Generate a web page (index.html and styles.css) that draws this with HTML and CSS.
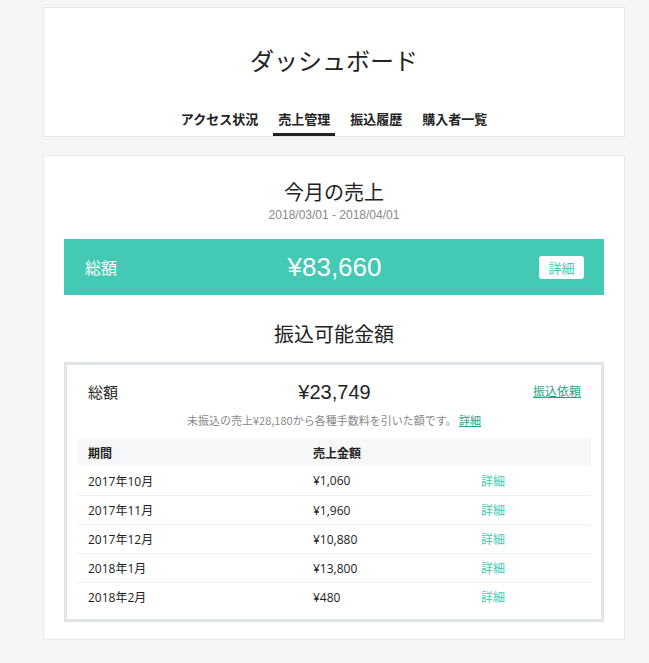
FILE: index.html
```html
<!DOCTYPE html>
<html lang="ja">
<head>
    <meta charset="UTF-8">
    <meta name="viewport" content="width=device-width, initial-scale=1.0">
    <title>ダッシュボード</title>
    <link rel="stylesheet" href="styles.css">
</head>
<body>
    <div class="page">
        <div class="card header-card">
            <h1 class="page-title">ダッシュボード</h1>
            <nav class="tabs">
                <a class="tab">アクセス状況</a>
                <a class="tab active">売上管理</a>
                <a class="tab">振込履歴</a>
                <a class="tab">購入者一覧</a>
            </nav>
        </div>

        <div class="card sales-card">
            <h2 class="section-title">今月の売上</h2>
            <div class="period">2018/03/01 - 2018/04/01</div>

            <div class="total-bar">
                <span class="total-label">総額</span>
                <span class="total-amount">¥83,660</span>
                <span class="total-action"><button class="detail-btn">詳細</button></span>
            </div>

            <h2 class="section-title transfer-title">振込可能金額</h2>

            <div class="transfer-box">
                <div class="transfer-summary">
                    <span class="summary-label">総額</span>
                    <span class="summary-amount">¥23,749</span>
                    <span class="summary-action"><a class="link">振込依頼</a></span>
                </div>
                <p class="note">未振込の売上¥28,180から各種手数料を引いた額です。 <a class="link">詳細</a></p>

                <table class="history">
                    <thead>
                        <tr>
                            <th class="col-period">期間</th>
                            <th class="col-amount">売上金額</th>
                            <th></th>
                        </tr>
                    </thead>
                    <tbody>
                        <tr><td>2017年10月</td><td>¥1,060</td><td><a class="row-link">詳細</a></td></tr>
                        <tr><td>2017年11月</td><td>¥1,960</td><td><a class="row-link">詳細</a></td></tr>
                        <tr><td>2017年12月</td><td>¥10,880</td><td><a class="row-link">詳細</a></td></tr>
                        <tr><td>2018年1月</td><td>¥13,800</td><td><a class="row-link">詳細</a></td></tr>
                        <tr><td>2018年2月</td><td>¥480</td><td><a class="row-link">詳細</a></td></tr>
                    </tbody>
                </table>
            </div>
        </div>
    </div>
</body>
</html>
```

FILE: styles.css
```css
/* General */
body {
  margin: 0;
  background-color: #f5f6f6;
  font-family: "Liberation Sans", "Noto Sans CJK JP", sans-serif;
  color: #222;
}

.page {
  width: 582px;
  margin: 7px 0 0 43px;
}

.card {
  background-color: #fff;
  border: 1px solid #e8e9e9;
  box-sizing: border-box;
}

/* Header card */
.header-card {
  height: 130px;
  display: flex;
  flex-direction: column;
  align-items: center;
}

.page-title {
  margin: 37px 0 0;
  font-size: 24px;
  font-weight: normal;
  line-height: 30px;
  font-family: "Noto Sans CJK JP", sans-serif;
}

.tabs {
  margin-top: auto;
  display: flex;
  gap: 10px;
}

.tab {
  padding: 0 5px 4px;
  font-size: 13px;
  font-weight: bold;
  line-height: 20px;
  font-family: "Noto Sans CJK JP", sans-serif;
  border-bottom: 3px solid transparent;
}

.tab.active {
  border-bottom-color: #222;
}

/* Sales card */
.sales-card {
  margin-top: 18px;
  padding: 22px 20px 17px;
}

.section-title {
  margin: 0;
  text-align: center;
  font-size: 20px;
  font-weight: normal;
  line-height: 28px;
  font-family: "Noto Sans CJK JP", sans-serif;
}

.period {
  text-align: center;
  font-size: 12px;
  line-height: 18px;
  color: #888;
}

.total-bar {
  margin-top: 15px;
  height: 56px;
  padding: 0 20px 0 21px;
  background-color: #43c9b4;
  color: #fff;
  display: grid;
  grid-template-columns: 1fr auto 1fr;
  align-items: center;
}

.total-label {
  font-size: 16px;
  font-family: "Noto Sans CJK JP", sans-serif;
}

.total-amount {
  font-size: 26px;
}

.total-action {
  text-align: right;
}

.detail-btn {
  width: 45px;
  height: 23px;
  border: none;
  border-radius: 3px;
  background-color: #fff;
  color: #43c9b4;
  font-size: 13px;
  font-family: "Noto Sans CJK JP", sans-serif;
  padding: 0;
}

.transfer-title {
  margin-top: 25px;
}

/* Transfer box */
.transfer-box {
  margin-top: 14px;
  border: 3px solid #e1e4e7;
  padding: 14px 10px 8px;
}

.transfer-summary {
  display: grid;
  grid-template-columns: 1fr auto 1fr;
  align-items: center;
  line-height: 24px;
  padding: 0 10px 0 11px;
}

.summary-label {
  font-size: 15px;
  font-family: "Noto Sans CJK JP", sans-serif;
}

.summary-amount {
  font-size: 20px;
}

.summary-action {
  text-align: right;
  font-size: 12px;
}

.link {
  color: #1fa585;
  text-decoration: underline;
  font-family: "Noto Sans CJK JP", sans-serif;
}

.note {
  margin: 7px 0 0;
  text-align: center;
  font-size: 11px;
  line-height: 18px;
  color: #888;
  font-family: "Noto Sans CJK JP", sans-serif;
}

/* History table */
.history {
  margin-top: 9px;
  width: 100%;
  border-collapse: collapse;
  font-size: 12px;
  font-family: "Open Sans", "Noto Sans CJK JP", sans-serif;
}

.history th {
  height: 28px;
  padding: 0 11px;
  background-color: #f6f7f8;
  text-align: left;
  font-weight: bold;
  font-family: "Noto Sans CJK JP", sans-serif;
}

.col-period {
  width: 203px;
}

.col-amount {
  width: 146px;
}

.history td {
  height: 28px;
  padding: 0 11px;
  border-top: 1px solid #f0f1f1;
}

.history tbody tr:first-child td {
  border-top: none;
  height: 29px;
}

.row-link {
  color: #43c9b4;
  font-family: "Noto Sans CJK JP", sans-serif;
}
```
